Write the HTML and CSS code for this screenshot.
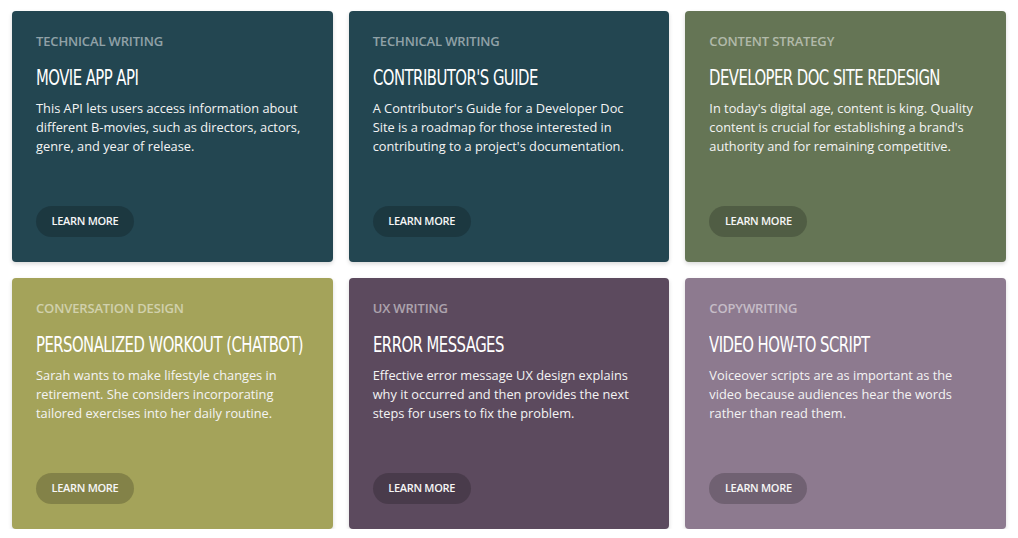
FILE: index.html
```html
<!DOCTYPE html>
<html>
<head>
<meta charset="utf-8">
<link rel="stylesheet" href="styles.css">
</head>
<body>
<div class="grid">
  <div class="card c1">
    <div class="cat">TECHNICAL WRITING</div>
    <h2 class="title">MOVIE APP API</h2>
    <p class="desc">This API lets users access information about different B-movies, such as directors, actors, genre, and year of release.</p>
    <a class="btn">LEARN MORE</a>
  </div>
  <div class="card c2">
    <div class="cat">TECHNICAL WRITING</div>
    <h2 class="title">CONTRIBUTOR'S GUIDE</h2>
    <p class="desc">A Contributor's Guide for a Developer Doc Site is a roadmap for those interested in contributing to a project's documentation.</p>
    <a class="btn">LEARN MORE</a>
  </div>
  <div class="card c3">
    <div class="cat">CONTENT STRATEGY</div>
    <h2 class="title">DEVELOPER DOC SITE REDESIGN</h2>
    <p class="desc">In today's digital age, content is king. Quality content is crucial for establishing a brand's authority and for remaining competitive.</p>
    <a class="btn">LEARN MORE</a>
  </div>
  <div class="card c4">
    <div class="cat">CONVERSATION DESIGN</div>
    <h2 class="title">PERSONALIZED WORKOUT (CHATBOT)</h2>
    <p class="desc">Sarah wants to make lifestyle changes in retirement. She considers incorporating tailored exercises into her daily routine.</p>
    <a class="btn">LEARN MORE</a>
  </div>
  <div class="card c5">
    <div class="cat">UX WRITING</div>
    <h2 class="title">ERROR MESSAGES</h2>
    <p class="desc">Effective error message UX design explains why it occurred and then provides the next steps for users to fix the problem.</p>
    <a class="btn">LEARN MORE</a>
  </div>
  <div class="card c6">
    <div class="cat">COPYWRITING</div>
    <h2 class="title">VIDEO HOW-TO SCRIPT</h2>
    <p class="desc">Voiceover scripts are as important as the video because audiences hear the words rather than read them.</p>
    <a class="btn">LEARN MORE</a>
  </div>
</div>
</body>
</html>
```
FILE: styles.css
```css
html, body {
  margin: 0;
  padding: 0;
  background: #ffffff;
}
body {
  font-family: "Open Sans", "Noto Sans", sans-serif;
  padding: 11px 12px 0 12px;
}
.grid {
  display: grid;
  grid-template-columns: repeat(3, minmax(0, 1fr));
  column-gap: 16px;
  row-gap: 16px;
}
.card {
  height: 251px;
  min-width: 0;
  box-sizing: border-box;
  border-radius: 4px;
  padding: 21px 24px 25px 24px;
  display: flex;
  flex-direction: column;
  align-items: flex-start;
  box-shadow: 0 2px 4px rgba(0, 0, 0, 0.15);
  color: #ffffff;
}
.c1, .c2 { background: #234651; }
.c3 { background: #657555; }
.c4 { background: #a4a35a; }
.c5 { background: #5c4a5e; }
.c6 { background: #8d7a8f; }
.cat {
  font-size: 13px;
  font-weight: 600;
  line-height: 18px;
  letter-spacing: -0.15px;
  color: rgba(255, 255, 255, 0.5);
}
.title {
  margin: 15px 0 0 0;
  font-family: "DejaVu Sans", sans-serif;
  font-stretch: condensed;
  font-weight: 400;
  font-size: 22px;
  line-height: 26px;
  letter-spacing: -0.7px;
  white-space: nowrap;
  transform: scaleX(0.75);
  transform-origin: left center;
}
.desc {
  margin: 8px 0 0 0;
  font-size: 12.8px;
  line-height: 19px;
  color: #f4f4f4;
}
.btn {
  margin-top: auto;
  box-sizing: border-box;
  display: inline-flex;
  align-items: center;
  justify-content: center;
  width: 98px;
  height: 31px;
  padding-bottom: 2px;
  border-radius: 16px;
  background: rgba(0, 0, 0, 0.2);
  font-size: 11px;
  font-weight: 600;
  letter-spacing: -0.3px;
  color: #f6f6f6;
}
```
